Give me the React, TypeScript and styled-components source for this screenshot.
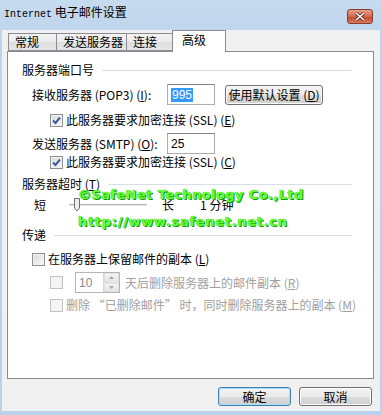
import { FC, ReactNode } from 'react';
import styled, { createGlobalStyle } from 'styled-components';

const GlobalStyle = createGlobalStyle`
  body {
    margin: 0;
    background: #ffffff;
  }
  * {
    box-sizing: border-box;
  }
`;

const Window = styled.div`
  width: 382px;
  height: 415px;
  display: flex;
  flex-direction: column;
  background: linear-gradient(#c7dbef, #bdd4ec 40px, #b9d1ea);
  font-family: "Noto Sans CJK SC", sans-serif;
  font-size: 12px;
  color: #000;
  overflow: hidden;
`;

const TitleBar = styled.div`
  height: 30px;
  flex: none;
  display: flex;
  align-items: center;
  justify-content: space-between;
  padding: 0 9px 0 4px;
`;

const Title = styled.div`
  font-size: 12px;
  line-height: 14px;
  margin-top: -3px;
`;

const Mono = styled.span`
  font-family: "Liberation Mono", monospace;
  font-size: 10px;
`;

const CloseBtn = styled.div`
  width: 26px;
  height: 15px;
  margin-top: 2px;
  border: 1px solid #8a3d2c;
  border-radius: 3px;
  background: linear-gradient(#e7a08d, #d2694d 50%, #c2492c 51%, #d6775c);
  display: flex;
  align-items: center;
  justify-content: center;
`;

const Client = styled.div`
  flex: 1;
  display: flex;
  flex-direction: column;
  margin: 0 2px 4px 2px;
  padding: 0 6px 0 5px;
  background: #f0f0f0;
`;

const TabStrip = styled.div`
  height: 21px;
  flex: none;
  display: flex;
  align-items: flex-end;
  padding-left: 1px;
  position: relative;
  z-index: 1;
`;

const Tab = styled.div<{ $w: number; $active?: boolean }>`
  width: ${p => p.$w}px;
  height: ${p => (p.$active ? 22 : 18)}px;
  margin-bottom: ${p => (p.$active ? -1 : 0)}px;
  padding-left: ${p => (p.$active ? 9 : 6)}px;
  border: 1px solid #898c95;
  border-bottom: ${p => (p.$active ? 'none' : '1px solid #898c95')};
  margin-right: -1px;
  background: ${p => (p.$active ? '#ffffff' : 'linear-gradient(#f3f3f3, #ebebeb 50%, #dedede 51%, #e5e5e5)')};
  display: flex;
  align-items: ${p => (p.$active ? 'flex-start' : 'center')};
  padding-top: ${p => (p.$active ? 1 : 0)}px;
  line-height: 16px;
  white-space: nowrap;
`;

const Panel = styled.div`
  height: 328px;
  flex: none;
  border: 1px solid #898c95;
  background: #ffffff;
  position: relative;
  padding: 10px 21px 0 14px;
  display: flex;
  flex-direction: column;
`;

const Row = styled.div<{ $indent?: number; $top?: number; $h?: number }>`
  display: flex;
  align-items: center;
  height: ${p => p.$h ?? 16}px;
  margin-top: ${p => p.$top ?? 0}px;
  padding-left: ${p => p.$indent ?? 0}px;
  white-space: nowrap;
  line-height: 16px;
`;

const Line = styled.div`
  flex: 1;
  height: 1px;
  background: #d5dfe5;
  margin-left: 8px;
`;

const Label = styled.span<{ $w?: number; $off?: boolean }>`
  width: ${p => (p.$w ? `${p.$w}px` : 'auto')};
  flex: none;
  color: ${p => (p.$off ? '#a0a0a0' : '#000')};
`;

const TextBox = styled.div<{ $off?: boolean }>`
  width: 48px;
  height: 21px;
  border: 1px solid ${p => (p.$off ? '#c9c9c9' : '#abadb3')};
  border-top-color: ${p => (p.$off ? '#c0c0c0' : '#7f8389')};
  background: #ffffff;
  display: flex;
  align-items: center;
  padding-left: 3px;
  font-family: "Liberation Sans", sans-serif;
  font-size: 12px;
  color: ${p => (p.$off ? '#8a8a8a' : '#000')};
`;

const Selected = styled.span`
  background: #3399ff;
  color: #ffffff;
  padding: 0 1px;
  line-height: 14px;
`;

const Button = styled.div<{ $w: number; $h?: number; $def?: boolean }>`
  width: ${p => p.$w}px;
  height: ${p => p.$h ?? 20}px;
  flex: none;
  border: 1px solid ${p => (p.$def ? '#3c7fb1' : '#707070')};
  border-radius: 3px;
  box-shadow: inset 0 0 0 1px ${p => (p.$def ? '#a6e0fc' : '#fcfcfc')};
  background: linear-gradient(#f2f2f2, #ebebeb 50%, #dddddd 51%, #cfcfcf);
  display: flex;
  align-items: center;
  justify-content: center;
  line-height: 16px;
`;

const CheckBox = styled.span<{ $off?: boolean }>`
  width: 13px;
  height: 13px;
  flex: none;
  margin-right: 3px;
  border: 1px solid ${p => (p.$off ? '#c3c3c3' : '#8e8f8f')};
  box-shadow: inset 0 0 0 1px #f4f4f4;
  background: ${p => (p.$off ? '#f4f4f4' : 'linear-gradient(135deg, #d8dade, #f9f9f9)')};
  display: flex;
  align-items: center;
  justify-content: center;
`;

const Spin = styled.div`
  width: 45px;
  height: 21px;
  margin: 0 5px 0 9px;
  border: 1px solid #b5b5b5;
  background: #fff;
  display: flex;
  align-items: center;
  justify-content: space-between;
  padding-left: 3px;
  font-family: "Liberation Sans", sans-serif;
  color: #8a8a8a;
`;

const SpinBtns = styled.div`
  width: 16px;
  height: 19px;
  display: flex;
  flex-direction: column;
  border-left: 1px solid #d6d6d6;
`;

const SpinHalf = styled.div`
  flex: 1;
  background: linear-gradient(#f4f4f4, #e4e4e4);
  border: 1px solid #e0e0e0;
  display: flex;
  align-items: center;
  justify-content: center;
`;

const Watermark = styled.div<{ $top: number; $ls?: number }>`
  position: absolute;
  left: 70px;
  top: ${p => p.$top}px;
  font-family: "DejaVu Sans", sans-serif;
  font-weight: bold;
  font-size: 13px;
  line-height: 16px;
  color: #66ff33;
  letter-spacing: ${p => p.$ls ?? 0.4}px;
  text-shadow: 0 0 1px #00a000, 1px 1px 0 #119911;
  white-space: nowrap;
  pointer-events: none;
`;

const Footer = styled.div`
  flex: 1;
  display: flex;
  justify-content: flex-end;
  align-items: flex-start;
  gap: 8px;
  padding-top: 8px;
  padding-right: 2px;
`;

const Check: FC<{ checked?: boolean; off?: boolean }> = ({ checked, off }) => (
  <CheckBox $off={off}>
    {checked && (
      <svg width="9" height="9" viewBox="0 0 9 9">
        <path d="M1 4.5 L3.5 7 L8 1.5" fill="none" stroke="#3f5b9c" strokeWidth="2" />
      </svg>
    )}
  </CheckBox>
);

const Heading: FC<{ children: ReactNode; top?: number }> = ({ children, top }) => (
  <Row $top={top}>
    <span>{children}</span>
    <Line />
  </Row>
);

const Slider: FC = () => (
  <svg width="82" height="16" viewBox="0 0 82 16" style={{ margin: '0 12px 0 22px' }}>
    <rect x="1" y="7" width="78" height="1" fill="#b3b3b3" />
    <rect x="1" y="8" width="78" height="1" fill="#e8e8e8" />
    <path d="M6.5 1.5 H11.5 V11 L9 14 L6.5 11 Z" fill="#eeeeee" stroke="#6f6f6f" />
  </svg>
);

export const App: FC = () => {
  return (
    <Window>
      <GlobalStyle />
      <TitleBar>
        <Title>
          <Mono>Internet</Mono> 电子邮件设置
        </Title>
        <CloseBtn>
          <svg width="12" height="9" viewBox="0 0 12 9">
            <path d="M2 1 L10 8 M10 1 L2 8" stroke="#5a2418" strokeWidth="3" />
            <path d="M2 1 L10 8 M10 1 L2 8" stroke="#ffffff" strokeWidth="1.6" />
          </svg>
        </CloseBtn>
      </TitleBar>
      <Client>
        <TabStrip>
          <Tab $w={49}>常规</Tab>
          <Tab $w={71}>发送服务器</Tab>
          <Tab $w={47}>连接</Tab>
          <Tab $w={54} $active>高级</Tab>
        </TabStrip>
        <Panel>
          <Heading>服务器端口号</Heading>
          <Row $indent={10} $top={6} $h={21}>
            <Label $w={135}>接收服务器 (POP3) (<u>I</u>):</Label>
            <TextBox>
              <Selected>995</Selected>
            </TextBox>
            <Button $w={98} style={{ marginLeft: 10 }}>使用默认设置 (<u>D</u>)</Button>
          </Row>
          <Row $indent={28} $top={7}>
            <Check checked />
            <span>此服务器要求加密连接 (SSL) (<u>E</u>)</span>
          </Row>
          <Row $indent={10} $top={5} $h={21}>
            <Label $w={135}>发送服务器 (SMTP) (<u>O</u>):</Label>
            <TextBox>25</TextBox>
          </Row>
          <Row $indent={28}>
            <Check checked />
            <span>此服务器要求加密连接 (SSL) (<u>C</u>)</span>
          </Row>
          <Heading top={6}>服务器超时 (<u>T</u>)</Heading>
          <Row $indent={12} $top={5}>
            <span>短</span>
            <Slider />
            <span>长</span>
            <span style={{ marginLeft: 26 }}>1 分钟</span>
          </Row>
          <Heading top={14}>传递</Heading>
          <Row $indent={10} $top={8}>
            <Check />
            <span>在服务器上保留邮件的副本 (<u>L</u>)</span>
          </Row>
          <Row $indent={28} $top={5} $h={21}>
            <Check off />
            <Spin>
              10
              <SpinBtns>
                <SpinHalf>
                  <svg width="5" height="3" viewBox="0 0 5 3"><path d="M0 3 L2.5 0 L5 3 Z" fill="#a8a8a8" /></svg>
                </SpinHalf>
                <SpinHalf>
                  <svg width="5" height="3" viewBox="0 0 5 3"><path d="M0 0 L2.5 3 L5 0 Z" fill="#a8a8a8" /></svg>
                </SpinHalf>
              </SpinBtns>
            </Spin>
            <Label $off>天后删除服务器上的邮件副本 (<u>R</u>)</Label>
          </Row>
          <Row $indent={28} $top={4}>
            <Check off />
            <Label $off>删除 “已删除邮件” 时，同时删除服务器上的副本 (<u>M</u>)</Label>
          </Row>
          <Watermark $top={135}>©SafeNet Technology Co.,Ltd</Watermark>
          <Watermark $top={162} $ls={0.7}>http://www.safenet.net.cn</Watermark>
        </Panel>
        <Footer>
          <Button $w={73} $h={19} $def>确定</Button>
          <Button $w={73} $h={19}>取消</Button>
        </Footer>
      </Client>
    </Window>
  );
};

export default App;
